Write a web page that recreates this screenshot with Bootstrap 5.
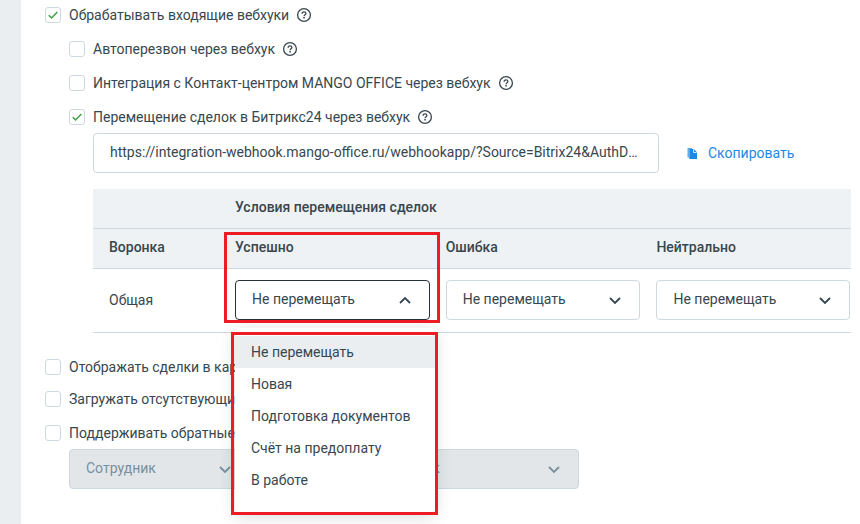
<!DOCTYPE html>
<html lang="ru">
<head>
<meta charset="utf-8">
<meta name="viewport" content="width=device-width, initial-scale=1">
<title>Настройки интеграции</title>
<link href="https://cdn.jsdelivr.net/npm/bootstrap@5.3.0/dist/css/bootstrap.min.css" rel="stylesheet">
<style>
  body { font-family: Roboto, "Noto Sans", sans-serif; font-size: 14px; line-height: 20px; color: #37474f; background: #fff; }
  .side-strip { width: 21px; background: #eaeef1; }
  .settings { padding: 5px 9px 20px 24px; }
  .option { display: flex; align-items: center; height: 20px; margin-bottom: 14px; }
  .option .form-check-input { width: 16px; height: 16px; margin: 0 8px 0 0; border: 1px solid #cfd8dc; border-radius: 3px; flex: none; position: static; }
  .option .form-check-input:checked { background-color: #fff; background-size: 16px 16px;
    background-image: url("data:image/svg+xml,%3csvg xmlns='http://www.w3.org/2000/svg' viewBox='0 0 16 16'%3e%3cpath fill='none' stroke='%2343a047' stroke-width='1.5' d='M3.7 8.2l2.9 2.7 5.7-6'/%3e%3c/svg%3e"); }
  .option label { white-space: nowrap; }
  .help { width: 16px; height: 16px; margin-left: 7px; color: #37474f; }
  .help svg { display: block; }
  .nested { padding-left: 24px; }
  .tight { margin-bottom: 12px; }
  .field, .field:focus { height: 40px; font-size: 14px; line-height: 20px; padding: 8px 20px 10px 16px; color: #37474f; border: 1px solid #cfd8dc; border-radius: 4px; }
  .url-row { padding-top: 6px; }
  .url-field { width: 566px; text-overflow: ellipsis; }
  .copy-link { color: #1e88e5; }
  .pick { padding-right: 40px; background-position: right 16px center; background-size: 16px 16px;
    background-image: url("data:image/svg+xml,%3csvg xmlns='http://www.w3.org/2000/svg' viewBox='0 0 16 16'%3e%3cpath fill='none' stroke='%2337474f' stroke-width='1.8' d='M3 6l5 5 5-5'/%3e%3c/svg%3e"); }
  .pick:disabled { background-color: #e2e6e9; color: #78909c; opacity: 1;
    background-image: url("data:image/svg+xml,%3csvg xmlns='http://www.w3.org/2000/svg' viewBox='0 0 16 16'%3e%3cpath fill='none' stroke='%2378909c' stroke-width='1.8' d='M3 6l5 5 5-5'/%3e%3c/svg%3e"); }
  .pick-open { border-color: #263238; background-color: #fff; text-align: left;
    background-image: url("data:image/svg+xml,%3csvg xmlns='http://www.w3.org/2000/svg' viewBox='0 0 16 16'%3e%3cpath fill='none' stroke='%2337474f' stroke-width='1.8' d='M3 11l5-5 5 5'/%3e%3c/svg%3e"); }
  .rules { table-layout: fixed; margin: 0 0 24px; color: #37474f; }
  .rules th, .rules td { border-bottom: 1px solid #cfd8dc; padding: 8px 16px 11px 0; color: #37474f; box-shadow: none; }
  .rules thead th { background: #eef2f5; font-weight: 500; }
  .rules tbody td { padding: 11px 16px 12px 0; vertical-align: middle; }
  .rules tr > :first-child { padding-left: 16px; }
  .rules tr > :last-child { padding-right: 1px; }
  .col-funnel { width: 142px; }
  .col-state { width: 27.8%; }
  .menu-wrap { position: relative; }
  .stage-menu { display: block; top: 48px; left: 0; width: 200px; padding: 8px 0 16px; border: 0; border-radius: 4px; font-size: 14px; box-shadow: 0 4px 16px rgba(38, 50, 56, .2); z-index: 5; }
  .stage-menu .dropdown-item { padding: 6px 16px; color: #37474f; line-height: 20px; }
  .stage-menu .dropdown-item.active { background: #eaeef1; }
  .frame { position: absolute; border: 3px solid #ed1c24; pointer-events: none; z-index: 6; }
  .frame-field { inset: -48px -10px -3px -11px; }
  .frame-menu { inset: 4px -3px -3px -4px; }
  .who { width: 181px; }
  .dept { width: 226px; margin-left: 103px; }
</style>
<script src="https://cdn.jsdelivr.net/npm/bootstrap@5.3.0/dist/js/bootstrap.bundle.min.js"></script>
</head>
<body>
<svg class="d-none" aria-hidden="true">
  <symbol id="q" viewBox="0 0 16 16">
    <circle cx="8" cy="8" r="6.4" fill="none" stroke="currentColor" stroke-width="1.3"/>
    <path d="M6.1 6.7c0-1.2.8-1.9 1.9-1.9s1.9.7 1.9 1.7c0 1.3-1.8 1.4-1.8 2.7" fill="none" stroke="currentColor" stroke-width="1.3"/>
    <path d="M7.3 10.1h1.5v1.4H7.3z" fill="currentColor"/>
  </symbol>
</svg>
<div class="d-flex min-vh-100">
  <aside class="side-strip flex-shrink-0"></aside>
  <main class="settings flex-grow-1">
    <div class="option">
      <input class="form-check-input" type="checkbox" id="c1" checked><label for="c1">Обрабатывать входящие вебхуки</label>
      <button type="button" class="help btn p-0 border-0" aria-label="Справка"><svg width="16" height="16"><use href="#q"/></svg></button>
    </div>
    <div class="nested">
      <div class="option">
        <input class="form-check-input" type="checkbox" id="c2"><label for="c2">Автоперезвон через вебхук</label>
        <button type="button" class="help btn p-0 border-0" aria-label="Справка"><svg width="16" height="16"><use href="#q"/></svg></button>
      </div>
      <div class="option">
        <input class="form-check-input" type="checkbox" id="c3"><label for="c3">Интеграция с Контакт-центром MANGO OFFICE через вебхук</label>
        <button type="button" class="help btn p-0 border-0" aria-label="Справка"><svg width="16" height="16"><use href="#q"/></svg></button>
      </div>
      <div class="option mb-0">
        <input class="form-check-input" type="checkbox" id="c4" checked><label for="c4">Перемещение сделок в Битрикс24 через вебхук</label>
        <button type="button" class="help btn p-0 border-0" aria-label="Справка"><svg width="16" height="16"><use href="#q"/></svg></button>
      </div>
      <div class="nested">
        <div class="url-row d-flex align-items-center mb-3">
          <input class="form-control field url-field" type="text" readonly aria-label="Адрес вебхука" value="https://integration-webhook.mango-office.ru/webhookapp/?Source=Bitrix24&amp;AuthData=token">
          <a href="#" class="copy-link d-flex align-items-center gap-2 text-decoration-none ms-4">
            <svg width="17" height="16" viewBox="0 0 17 16" aria-hidden="true"><path d="M4.5 3H9v1.2H6v8.3H4.5z" fill="#1e88e5" opacity=".7"/><path d="M6.3 4h4.4l3.3 3.3v6.7H6.3z" fill="#1e88e5"/><path d="M10.5 4.3v3.2h3" fill="none" stroke="#fff" stroke-width=".8"/></svg>
            Скопировать</a>
        </div>
        <table class="table rules">
          <colgroup><col class="col-funnel"><col class="col-state"><col class="col-state"><col></colgroup>
          <thead>
            <tr><th></th><th colspan="3">Условия перемещения сделок</th></tr>
            <tr><th>Воронка</th><th>Успешно</th><th>Ошибка</th><th>Нейтрально</th></tr>
          </thead>
          <tbody>
            <tr>
              <td>Общая</td>
              <td>
                <div class="menu-wrap">
                  <button type="button" class="form-select field pick pick-open" aria-expanded="true">Не перемещать</button>
                  <div class="frame frame-field"></div>
                  <div class="dropdown-menu stage-menu">
                    <a class="dropdown-item active" href="#">Не перемещать</a>
                    <a class="dropdown-item" href="#">Новая</a>
                    <a class="dropdown-item" href="#">Подготовка документов</a>
                    <a class="dropdown-item" href="#">Счёт на предоплату</a>
                    <a class="dropdown-item" href="#">В работе</a>
                    <div class="frame frame-menu"></div>
                  </div>
                </div>
              </td>
              <td><select class="form-select field pick" aria-label="Ошибка"><option>Не перемещать</option></select></td>
              <td><select class="form-select field pick" aria-label="Нейтрально"><option>Не перемещать</option></select></td>
            </tr>
          </tbody>
        </table>
      </div>
    </div>
    <div class="option tight"><input class="form-check-input" type="checkbox" id="c5"><label for="c5">Отображать сделки в карточке</label></div>
    <div class="option"><input class="form-check-input" type="checkbox" id="c6"><label for="c6">Загружать отсутствующие сделки</label></div>
    <div class="option mb-0"><input class="form-check-input" type="checkbox" id="c7"><label for="c7">Поддерживать обратные звонки</label></div>
    <div class="nested url-row d-flex">
      <select class="form-select field pick who" aria-label="Сотрудник" disabled><option>Сотрудник</option></select>
      <select class="form-select field pick dept" aria-label="Ответственный" disabled><option>Сотрудник</option></select>
    </div>
  </main>
</div>
</body>
</html>
